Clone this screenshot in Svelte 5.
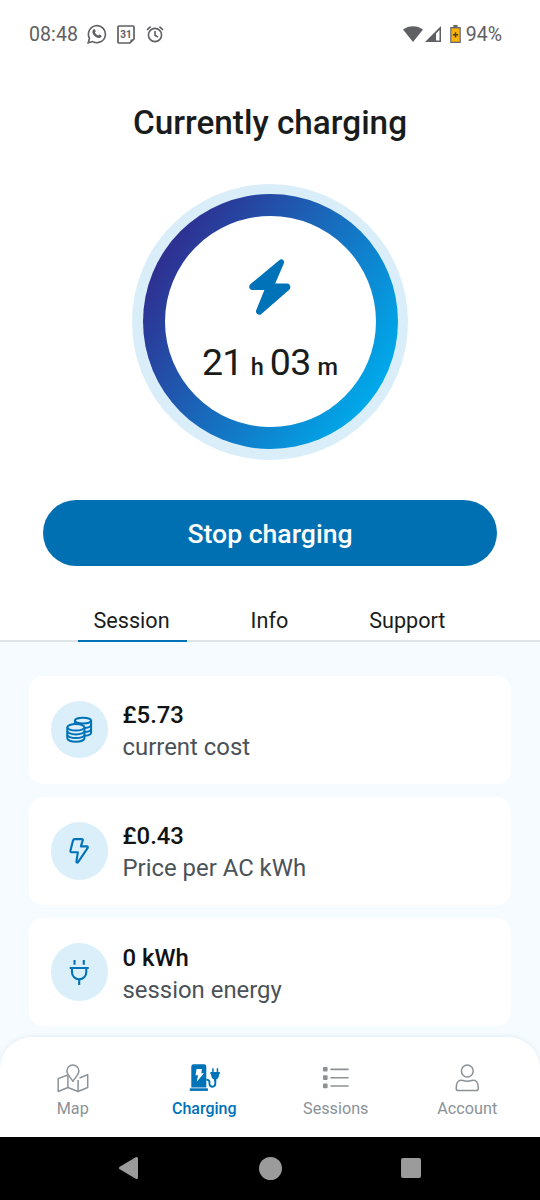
<script lang="ts">
  type IconName = "coins" | "bolt" | "plug" | "map" | "station" | "list" | "user";

  const tabs = ["Session", "Info", "Support"];
  let activeTab = $state("Session");

  const stats: { icon: IconName; value: string; label: string }[] = [
    { icon: "coins", value: "£5.73", label: "current cost" },
    { icon: "bolt", value: "£0.43", label: "Price per AC kWh" },
    { icon: "plug", value: "0 kWh", label: "session energy" },
  ];

  const navItems: { icon: IconName; label: string }[] = [
    { icon: "map", label: "Map" },
    { icon: "station", label: "Charging" },
    { icon: "list", label: "Sessions" },
    { icon: "user", label: "Account" },
  ];
  let activeNav = $state("Charging");
</script>

{#snippet icon(name: IconName)}
  <svg class="icon" viewBox="0 0 32 32" width="32" height="32">
    {#if name === "coins"}
      <g fill="none" stroke="currentColor" stroke-width="2">
        <ellipse cx="20" cy="6.600" rx="8.100" ry="2.900" />
        <path d="M11.900 6.600v3.400M28.100 6.600v12.200c0 1.500-2.400 2.600-6 3" />
        <path d="M28.100 10.800c0 1.600-2.500 2.900-6.500 3.200M28.100 14.900c0 1.600-2.500 2.800-6 3.100" />
        <ellipse cx="12.900" cy="13.300" rx="8.600" ry="3.300" />
        <path d="M4.300 13.300v11c0 1.900 3.800 3.400 8.600 3.400s8.600-1.500 8.600-3.400v-11" />
        <path d="M4.300 17c0 1.900 3.800 3.400 8.600 3.400s8.600-1.500 8.600-3.400" />
        <path d="M4.300 20.700c0 1.900 3.800 3.400 8.600 3.400s8.600-1.500 8.600-3.400" />
      </g>
    {:else if name === "bolt"}
      <path
        d="M11.800 4.100h7.200a.8.8 0 0 1 .8 1l-1.900 6.300h5.900c.9 0 1.300.8.900 1.500l-9.600 14.200c-.6.900-1.800.4-1.700-.6l1.500-9.300H8.600a1.200 1.200 0 0 1-1.200-1.400l2.600-10.200c.2-1 .8-1.500 1.800-1.500Z"
        fill="none"
        stroke="currentColor"
        stroke-width="2.100"
        stroke-linejoin="round"
      />
    {:else if name === "plug"}
      <path
        d="M11.500 4v4.800M20.800 4v4.800M6.700 12h19M9 12v4.200a7.150 7.150 0 0 0 14.300 0V12M16.200 23.300v5.700"
        fill="none"
        stroke="currentColor"
        stroke-width="2.100"
      />
    {:else if name === "map"}
      <g fill="none" stroke="currentColor" stroke-width="1.500" stroke-linejoin="round">
        <path d="M10.600 12 1.200 15.600v12.900l9.700-4 10.200 4 9.600-4V11.600L22.500 15" />
        <path d="M10.900 13v11.500M21.100 17v11.500" />
        <path d="M15.900 18.300c-2.700-4-6-7-6-10.300a6 6 0 0 1 12 0c0 3.300-3.300 6.300-6 10.300Z" />
      </g>
    {:else if name === "station"}
      <g fill="currentColor">
        <path d="M5.500 1.200h10.600a2.200 2.200 0 0 1 2.200 2.200v21H3.300v-21a2.200 2.200 0 0 1 2.200-2.200Z" />
        <path d="M1.800 25.300h18.100v2.600H1.800z" />
        <path d="M24.200 5.300h1.500v3.800h3V5.300h1.500v3.800h1.600v2h-.7c0 3-.9 4.700-2.900 5.300v2h-2.200v-2c-2-.6-2.900-2.300-2.900-5.300h-.7v-2h1.800Z" />
      </g>
      <path
        d="M18.300 16.600c2.300 0 3.200.9 3.200 2.700v1.500c0 4 5.800 4 5.800-.2v-3"
        fill="none"
        stroke="currentColor"
        stroke-width="1.900"
      />
      <path d="M8.600 6h5.300l-.6 4.200h2.600L8.800 18.700l1.300-6.400H7.500Z" fill="#fff" />
    {:else if name === "list"}
      <g fill="currentColor">
        <rect x="3" y="4" width="4.600" height="4.600" rx=".8" />
        <rect x="3" y="12.300" width="4.600" height="4.600" rx=".8" />
        <rect x="3" y="20.600" width="4.600" height="4.600" rx=".8" />
        <path d="M10.400 5.600h18.200v1.600H10.400zM10.400 13.900h18.200v1.600H10.400zM10.400 22.200h18.200v1.600H10.400z" />
      </g>
    {:else if name === "user"}
      <g fill="none" stroke="currentColor" stroke-width="1.500">
        <circle cx="16.300" cy="8" r="5.900" />
        <path d="M7.200 27.600h18.100a1.900 1.900 0 0 0 1.900-1.900v-2.200c0-5-3.200-7-6.500-6-3 .9-5.800.9-8.800 0-3.200-1-6.600 1-6.600 6v2.200a1.900 1.900 0 0 0 1.900 1.900Z" />
      </g>
    {/if}
  </svg>
{/snippet}

<div class="phone">
  <header class="status-bar">
    <span class="clock">08:48</span>
    <svg class="whatsapp" width="20" height="20" viewBox="0 0 20 20">
      <path
        d="M1.200 18.800 2.500 14.300A8.500 8.500 0 1 1 5.800 17.600Z"
        fill="none"
        stroke="currentColor"
        stroke-width="1.600"
      />
      <path
        d="M6.700 5.300c.5-.4 1-.3 1.300.3l.7 1.600c.1.500-.5 1-.8 1.400.7 1.400 1.800 2.400 3.300 3 .5-.4.900-1.200 1.400-1.100l1.700.9c.5.300.3 1-.1 1.500-2 2.200-5.300.5-7.100-1.400C5.300 9.600 4.600 6.900 6.700 5.300Z"
        fill="currentColor"
      />
    </svg>
    <svg class="calendar" width="18" height="19" viewBox="0 0 18 19">
      <path
        d="M2 1h14a1 1 0 0 1 1 1v11.800L12.800 18H2a1 1 0 0 1-1-1V2a1 1 0 0 1 1-1Z"
        fill="none"
        stroke="currentColor"
        stroke-width="1.700"
      />
      <path d="M13.500 18v-3.500H17Z" fill="currentColor" />
      <text x="8.900" y="12.800" text-anchor="middle" fill="currentColor">31</text>
    </svg>
    <svg class="alarm" width="18" height="18" viewBox="0 0 18 18">
      <g fill="none" stroke="currentColor" stroke-width="1.600">
        <circle cx="9" cy="10" r="6.600" />
        <path d="M9 6v4.300l2.800 1.700M1 4.800 4.600 1.700M17 4.800l-3.600-3.100" />
      </g>
    </svg>
    <div class="signals">
      <svg width="20" height="16" viewBox="0 0 20 16">
        <path d="M0 3.600C5.500-1 14.500-1 20 3.600L10 16Z" fill="currentColor" />
      </svg>
      <svg class="cell" width="16" height="16" viewBox="0 0 16 16">
        <path d="M16 0v16H0ZM14.500 4 11 7.500v7h3.500Z" fill="currentColor" fill-rule="evenodd" />
      </svg>
      <svg class="battery" width="11" height="18" viewBox="0 0 10 17">
        <path d="M3 0h4v2h3v15H0V2h3Z" fill="#66676b" />
        <path d="M1.100 3.200h7.800v12.600H1.100z" fill="#f9b208" />
        <path d="M5 6.800v5M2.500 9.300h5" stroke="#4d4020" stroke-width="1.400" />
      </svg>
      <span class="percent">94%</span>
    </div>
  </header>

  <h1>Currently charging</h1>

  <div class="dial">
    <div class="ring">
      <div class="face">
        <svg width="42" height="56" viewBox="0 0 42 56">
          <path
            d="M30.200 1.200 1.300 25.200C-.9 27.200.3 30.900 3.400 30.900H15.400L7.300 51.100C5.900 54.600 9.600 57.300 12.400 55L40.200 30.800C42.500 28.700 41.200 24.500 38.100 24.500H26.200L34.600 5C36.200 1.300 33-1.100 30.200 1.200Z"
            fill="#0072b8"
          />
        </svg>
        <div class="time">
          <span class="digits">21</span>
          <span class="unit">h</span>
          <span class="digits">03</span>
          <span class="unit">m</span>
        </div>
      </div>
    </div>
  </div>

  <button class="stop">Stop charging</button>

  <div class="tabs">
    {#each tabs as tab}
      <button class="tab" class:active={tab === activeTab} onclick={() => (activeTab = tab)}>
        {tab}
      </button>
    {/each}
  </div>

  <main>
    <div class="cards">
      {#each stats as stat}
        <div class="card">
          <div class="badge">{@render icon(stat.icon)}</div>
          <div class="text">
            <div class="value">{stat.value}</div>
            <div class="label">{stat.label}</div>
          </div>
        </div>
      {/each}
    </div>

    <nav>
      {#each navItems as item}
        <button
          class="nav-item"
          class:active={item.label === activeNav}
          onclick={() => (activeNav = item.label)}
        >
          {@render icon(item.icon)}
          <span>{item.label}</span>
        </button>
      {/each}
    </nav>
  </main>

  <footer class="system-bar">
    <svg width="21" height="24" viewBox="0 0 21 24">
      <path d="M18.500 2.500v19L2.500 12Z" fill="#9b9b9b" stroke="#9b9b9b" stroke-width="3" stroke-linejoin="round" />
    </svg>
    <div class="home"></div>
    <div class="recents"></div>
  </footer>
</div>

<style>
  :global(body) {
    margin: 0;
    background: #fff;
  }
  .phone {
    display: flex;
    flex-direction: column;
    width: 540px;
    height: 1200px;
    overflow: hidden;
    background: #fff;
    color: #1a1c1c;
    font-family: Roboto, "Noto Sans", sans-serif;
  }
  button {
    padding: 0;
    border: 0;
    background: none;
    color: inherit;
    font: inherit;
  }
  svg {
    display: block;
    flex: none;
  }

  .status-bar {
    display: flex;
    align-items: center;
    box-sizing: border-box;
    height: 68px;
    padding: 0 38px 0 29px;
    color: #5f6063;
    font-size: 19.500px;
  }
  .clock {
    letter-spacing: 0.1px;
  }
  .whatsapp {
    margin-left: 8.500px;
  }
  .calendar {
    margin-left: 10px;
    font-size: 10px;
    font-weight: 700;
  }
  .alarm {
    margin-left: 11px;
  }
  .signals {
    display: flex;
    align-items: center;
    margin-left: auto;
  }
  .cell {
    margin-left: 2px;
  }
  .battery {
    margin: 0 5px 0 9px;
  }

  h1 {
    margin: 34px 0 0;
    font-size: 33.300px;
    font-weight: 500;
    line-height: 41px;
    text-align: center;
  }

  .dial {
    display: flex;
    align-items: center;
    justify-content: center;
    align-self: center;
    width: 276px;
    height: 276px;
    margin-top: 40.500px;
    border-radius: 50%;
    background: #daeefa;
  }
  .ring {
    display: flex;
    align-items: center;
    justify-content: center;
    width: 255px;
    height: 255px;
    border-radius: 50%;
    background: linear-gradient(122deg, #2e3192 15%, #00a9ea 86%);
  }
  .face {
    display: flex;
    flex-direction: column;
    align-items: center;
    box-sizing: border-box;
    width: 211px;
    height: 211px;
    padding-top: 43px;
    border-radius: 50%;
    background: #fff;
  }
  .time {
    display: flex;
    align-items: baseline;
    margin-top: 25px;
    line-height: 44px;
  }
  .digits {
    font-size: 37.500px;
    letter-spacing: -0.7px;
  }
  .unit {
    margin: 0 6px 0 8px;
    font-size: 23.500px;
    font-weight: 500;
  }
  .unit:last-child {
    margin: 0 0 0 7px;
  }

  .stop {
    height: 66px;
    margin: 40.500px 43px 0;
    border-radius: 33px;
    background: #0070b3;
    color: #fff;
    font-size: 26.600px;
    font-weight: 500;
  }

  .tabs {
    display: flex;
    justify-content: center;
    gap: 48px;
    height: 73.500px;
    border-bottom: 2px solid #dfe4e8;
  }
  .tab {
    height: 44px;
    margin-top: 32px;
    padding: 2px 17px 0 16px;
    border-bottom: 2px solid transparent;
    font-size: 21.600px;
    line-height: 42px;
  }
  .tab.active {
    border-color: #0072b8;
  }

  main {
    display: flex;
    flex: 1;
    flex-direction: column;
    justify-content: space-between;
    background: #f5fbfe;
  }
  .cards {
    display: flex;
    flex-direction: column;
    gap: 13px;
    padding: 34px 29px 0;
  }
  .card {
    display: flex;
    align-items: center;
    gap: 14.500px;
    height: 108.300px;
    padding-left: 21.500px;
    border-radius: 14px;
    background: #fff;
  }
  .badge {
    display: flex;
    align-items: center;
    justify-content: center;
    width: 57.500px;
    height: 57.500px;
    border-radius: 50%;
    background: #daeffa;
    color: #0072b8;
  }
  .text {
    padding-top: 4px;
  }
  .value {
    color: #111314;
    font-size: 23.900px;
    font-weight: 500;
    line-height: 32px;
  }
  .label {
    color: #4b5258;
    font-size: 23.900px;
    line-height: 33px;
  }

  nav {
    display: flex;
    box-sizing: border-box;
    height: 100px;
    padding: 26px 7px 0;
    border-radius: 32px 32px 0 0;
    background: #fff;
    box-shadow: 0 0 5px rgba(60, 90, 110, 0.1);
  }
  .nav-item {
    display: flex;
    flex: 1;
    flex-direction: column;
    align-items: center;
    gap: 4px;
    color: #8a9298;
    font-size: 16.200px;
    line-height: 20px;
  }
  .nav-item.active {
    color: #0072b8;
    font-size: 16px;
    font-weight: 500;
  }

  .system-bar {
    display: flex;
    align-items: center;
    justify-content: space-between;
    box-sizing: border-box;
    height: 63px;
    padding: 0 119px 1px 118px;
    background: #000;
  }
  .home {
    width: 23px;
    height: 23px;
    border-radius: 50%;
    background: #9b9b9b;
  }
  .recents {
    width: 20px;
    height: 20px;
    border-radius: 2px;
    background: #9b9b9b;
  }
</style>
